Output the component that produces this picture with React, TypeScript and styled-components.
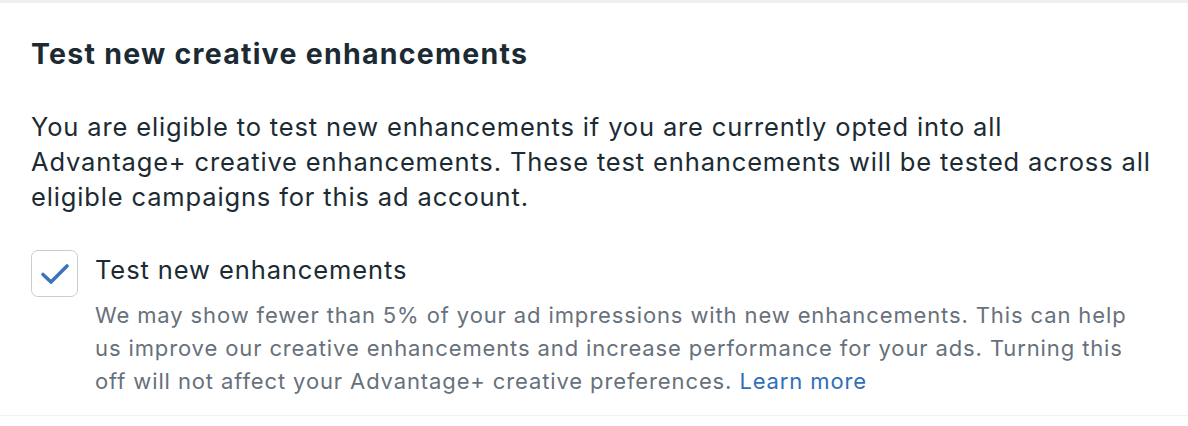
import styled, { createGlobalStyle } from "styled-components";

const GlobalStyle = createGlobalStyle`
  html, body {
    margin: 0;
    padding: 0;
    background: #ffffff;
  }
  body {
    font-family: Inter, "Noto Sans", "Liberation Sans", sans-serif;
    -webkit-font-smoothing: antialiased;
  }
`;

const Page = styled.div`
  width: 1188px;
  height: 426px;
  padding-top: 3px;
  box-sizing: border-box;
  background: linear-gradient(#efeef3 0, #efeef3 3px, #ffffff 3px);
  overflow: hidden;
`;

const Card = styled.section`
  height: 412px;
  box-sizing: border-box;
  background: #ffffff;
  border-radius: 8px 8px 0 0;
  box-shadow: 0 1px 0 #f1f1f3;
  padding: 33px 31px 0 31px;
  color: #1c2b33;
`;

const Title = styled.h2`
  margin: 0;
  font-size: 28.5px;
  line-height: 36px;
  font-weight: 700;
  letter-spacing: 1.25px;
`;

const Body = styled.p`
  margin: 37px 0 0 0;
  font-size: 25.5px;
  line-height: 35px;
  font-weight: 400;
  letter-spacing: 0.85px;
`;

const OptionRow = styled.label`
  display: flex;
  align-items: flex-start;
  gap: 17px;
  margin-top: 36px;
`;

const Box = styled.span`
  flex: none;
  width: 47px;
  height: 47px;
  box-sizing: border-box;
  border: 1.5px solid #c9ced6;
  border-radius: 7px;
  display: flex;
  align-items: center;
  justify-content: center;
`;

const OptionText = styled.div`
  display: flex;
  flex-direction: column;
`;

const OptionLabel = styled.span`
  font-size: 25.5px;
  line-height: 32px;
  color: #1c2b33;
  letter-spacing: 0.9px;
  margin-top: 4px;
`;

const Hint = styled.p`
  margin: 13px 0 0 0;
  font-size: 22px;
  line-height: 33px;
  color: #67717c;
  letter-spacing: 0.88px;
  white-space: nowrap;
`;

const Link = styled.a`
  color: #2f6eb9;
  text-decoration: none;
`;

const Check = () => (
  <svg width="30" height="24" viewBox="0 0 30 24" fill="none">
    <path
      d="M3 12.5 L11 20 L27 4"
      stroke="#3b74bd"
      strokeWidth="3.6"
      strokeLinecap="round"
      strokeLinejoin="round"
    />
  </svg>
);

export default function App() {
  return (
    <>
      <GlobalStyle />
      <Page>
        <Card>
          <Title>Test new creative enhancements</Title>
          <Body>
            You are eligible to test new enhancements if you are currently opted into all
            <br />
            Advantage+ creative enhancements. These test enhancements will be tested across all
            <br />
            eligible campaigns for this ad account.
          </Body>
          <OptionRow>
            <Box>
              <Check />
            </Box>
            <OptionText>
              <OptionLabel>Test new enhancements</OptionLabel>
              <Hint>
                We may show fewer than 5% of your ad impressions with new enhancements. This can help
                <br />
                us improve our creative enhancements and increase performance for your ads. Turning this
                <br />
                off will not affect your Advantage+ creative preferences. <Link href="#">Learn more</Link>
              </Hint>
            </OptionText>
          </OptionRow>
        </Card>
      </Page>
    </>
  );
}
